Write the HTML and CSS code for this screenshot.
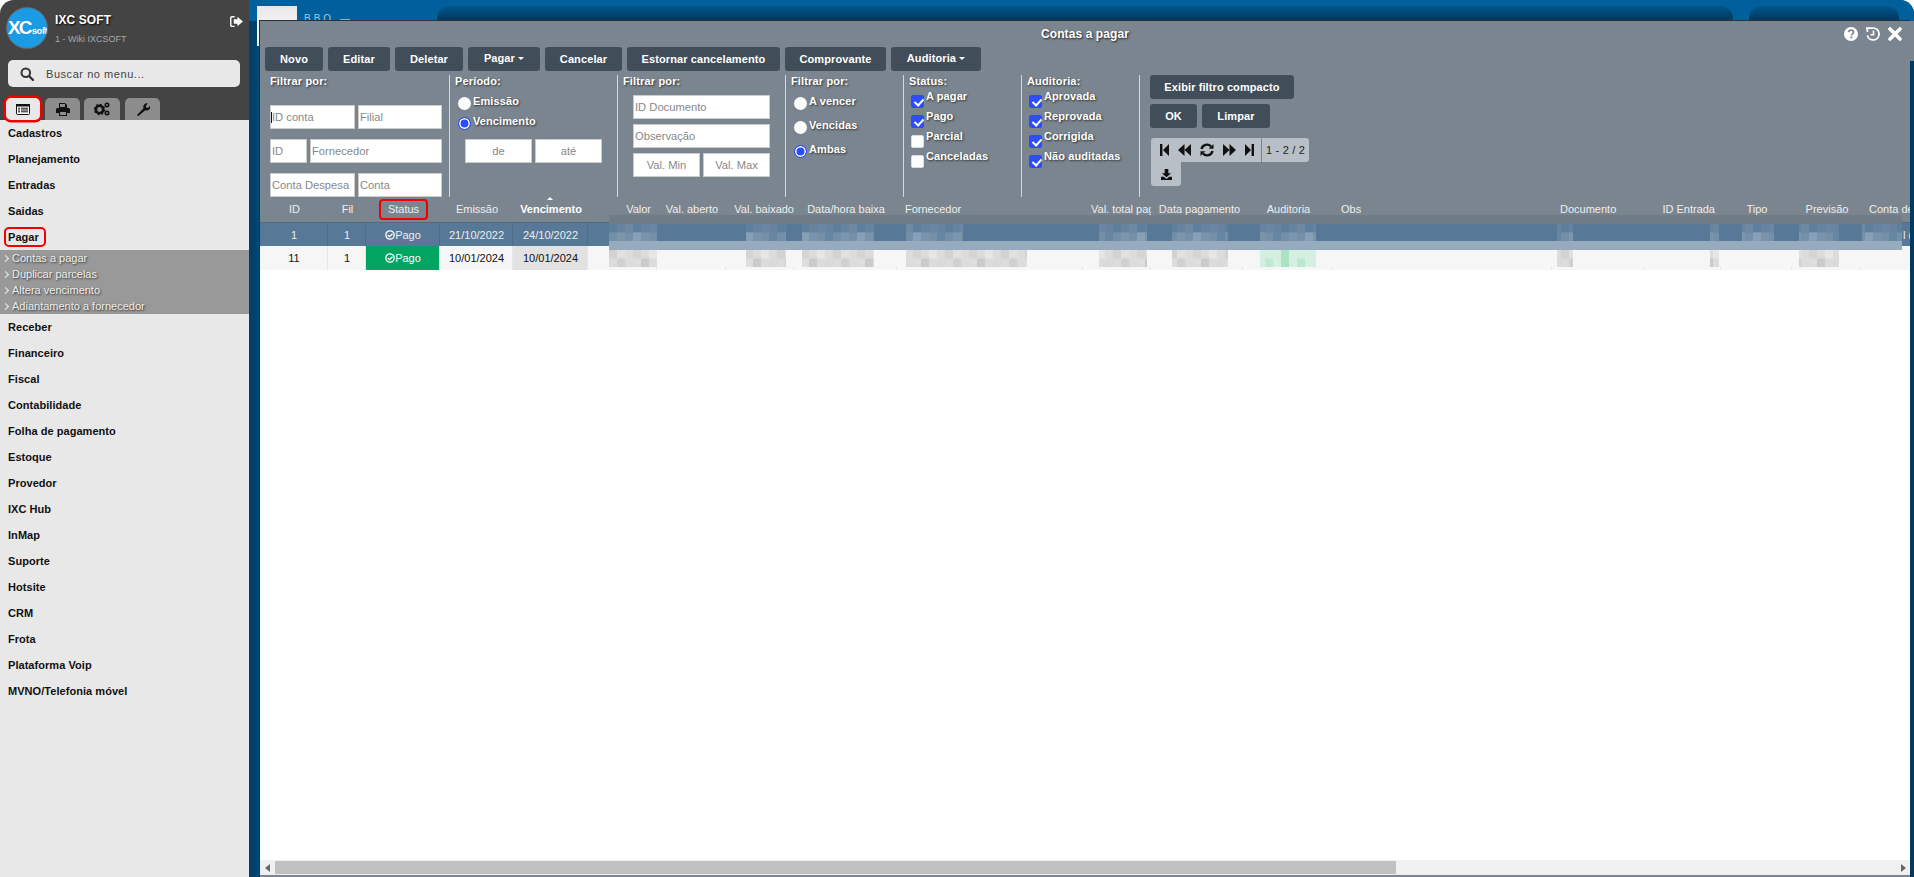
FILE: index.html
```html
<!DOCTYPE html>
<html lang="pt-BR">
<head>
<meta charset="utf-8">
<title>Contas a pagar</title>
<link rel="stylesheet" href="styles.css">
</head>
<body>
<aside class="side">
  <header class="brand">
    <div class="logo"><span class="logo-xc">XC</span><span class="logo-soft">soft</span></div>
    <div class="brand-text"><div class="brand-name">IXC SOFT</div><div class="brand-sub">1 - Wiki IXCSOFT</div></div>
    <svg class="logout" viewBox="0 0 14 12"><path d="M5 0H2a2 2 0 0 0-2 2v8a2 2 0 0 0 2 2h3v-1.500H2.200a.7.7 0 0 1-.7-.7V2.200a.7.7 0 0 1 .7-.7H5z M4 3.500h4V.8L14 6l-6 5.200V8.500H4z" fill="#fff"/></svg>
  </header>
  <div class="search">
    <svg class="search-ic" viewBox="0 0 14 14"><circle cx="5.800" cy="5.800" r="4.300" fill="none" stroke="#333" stroke-width="2"/><path d="M9 9l4 4" stroke="#333" stroke-width="2.400" stroke-linecap="round"/></svg>
    <span>Buscar no menu...</span>
  </div>
  <nav class="tabs">
    <div class="tab tab-active"><svg viewBox="0 0 14 11" width="14" height="11"><rect x=".5" y=".5" width="13" height="10" rx="1" fill="#fff" stroke="#111"/><rect x="0" y="0" width="14" height="2.500" fill="#111"/><path d="M2 4.200h2M5 4.200h7M2 6h2M5 6h7M2 7.800h2M5 7.800h7" stroke="#111" stroke-width="1"/></svg></div>
    <div class="tab"><svg viewBox="0 0 14 13" width="14" height="13"><path d="M3 0h6l2 2v3H3z M1.500 5h11A1.500 1.500 0 0 1 14 6.500V10h-3v3H3v-3H0V6.500A1.500 1.500 0 0 1 1.500 5z" fill="#111"/><rect x="4" y="9" width="6" height="3" fill="#8c8c8c"/><rect x="4" y="1" width="5" height="3" fill="#8c8c8c"/></svg></div>
    <div class="tab"><svg viewBox="0 0 16 14" width="16" height="14"><circle cx="5.500" cy="7.500" r="3.700" fill="none" stroke="#111" stroke-width="2.600"/><circle cx="5.500" cy="7.500" r="5" fill="none" stroke="#111" stroke-width="1.500" stroke-dasharray="1.800 2.100"/><circle cx="13" cy="3" r="1.700" fill="none" stroke="#111" stroke-width="1.600"/><circle cx="13" cy="11" r="1.700" fill="none" stroke="#111" stroke-width="1.600"/></svg></div>
    <div class="tab"><svg viewBox="0 0 14 14" width="14" height="14"><path d="M1 13l6.500-6.800a3.600 3.600 0 0 1 4.400-4.700L9.800 3.700l.4 1.800 1.800.4 2-2.100a3.600 3.600 0 0 1-4.700 4.500L3 13.500a1.300 1.300 0 0 1-2-.5z" fill="#111"/></svg></div>
  </nav>
  <ul class="menu">
    <li class="item">Cadastros</li>
    <li class="item">Planejamento</li>
    <li class="item">Entradas</li>
    <li class="item">Saidas</li>
    <li class="item"><span class="ring">Pagar</span></li>
    <li class="sub">
      <div class="sub-item">Contas a pagar</div>
      <div class="sub-item">Duplicar parcelas</div>
      <div class="sub-item">Altera vencimento</div>
      <div class="sub-item">Adiantamento a fornecedor</div>
    </li>
    <li class="item">Receber</li>
    <li class="item">Financeiro</li>
    <li class="item">Fiscal</li>
    <li class="item">Contabilidade</li>
    <li class="item">Folha de pagamento</li>
    <li class="item">Estoque</li>
    <li class="item">Provedor</li>
    <li class="item">IXC Hub</li>
    <li class="item">InMap</li>
    <li class="item">Suporte</li>
    <li class="item">Hotsite</li>
    <li class="item">CRM</li>
    <li class="item">Frota</li>
    <li class="item">Plataforma Voip</li>
    <li class="item">MVNO/Telefonia móvel</li>
  </ul>
</aside>

<main class="desk">
  <div class="back-tile"></div>
  <div class="back-bbo">BBO —</div>
  <div class="back-panel back-panel-a"></div>
  <div class="back-panel back-panel-b"></div>

  <section class="win">
    <header class="win-title">
      <span>Contas a pagar</span>
      <div class="win-icons">
        <svg viewBox="0 0 14 14" width="14" height="14"><circle cx="7" cy="7" r="7" fill="#fff"/><path d="M4.600 5.200C4.800 3.800 5.800 3.200 7.100 3.200c1.400 0 2.400.8 2.400 2 0 1.900-2 1.800-2 3.200" fill="none" stroke="#7a858f" stroke-width="1.700"/><rect x="6.400" y="9.500" width="2" height="1.800" fill="#7a858f"/></svg>
        <svg viewBox="0 0 14 14" width="14" height="14"><path d="M0 1.100H7.200A5.900 5.900 0 1 1 1.400 8.400" fill="none" stroke="#fff" stroke-width="1.800"/><path d="M1.400 1v4" fill="none" stroke="#fff" stroke-width="1.800"/><path d="M7.500 3.500v4.200H4.500" fill="none" stroke="#fff" stroke-width="1.600"/></svg>
        <svg viewBox="0 0 14 14" width="14" height="14"><path d="M2 2l10 10M12 2L2 12" stroke="#fff" stroke-width="3.600" stroke-linecap="round"/></svg>
      </div>
    </header>

    <div class="toolbar">
      <button class="btn w-novo">Novo</button>
      <button class="btn w-editar">Editar</button>
      <button class="btn w-deletar">Deletar</button>
      <button class="btn w-pagar btn-drop">Pagar <i class="caret"></i></button>
      <button class="btn w-cancelar">Cancelar</button>
      <button class="btn w-estornar">Estornar cancelamento</button>
      <button class="btn w-comprovante">Comprovante</button>
      <button class="btn w-auditoria btn-drop">Auditoria <i class="caret"></i></button>
    </div>

    <form class="filters">
      <fieldset class="fg fg-a">
        <div class="fg-label">Filtrar por:</div>
        <div class="in-row in-row-first"><input class="in in-85 in-caret" placeholder="ID conta"><input class="in in-84" placeholder="Filial"></div>
        <div class="in-row"><input class="in in-37" placeholder="ID"><input class="in in-132" placeholder="Fornecedor"></div>
        <div class="in-row"><input class="in in-85" placeholder="Conta Despesa"><input class="in in-84" placeholder="Conta"></div>
      </fieldset>
      <fieldset class="fg fg-b">
        <div class="fg-label">Período:</div>
        <label class="opt opt-p1"><input type="radio" name="p">Emissão</label>
        <label class="opt opt-p2"><input type="radio" name="p" checked>Vencimento</label>
        <div class="in-row in-row-date"><input class="in in-67 in-c" placeholder="de"><input class="in in-67 in-c" placeholder="até"></div>
      </fieldset>
      <fieldset class="fg fg-c">
        <div class="fg-label">Filtrar por:</div>
        <div class="stack">
          <input class="in in-137" placeholder="ID Documento">
          <input class="in in-137" placeholder="Observação">
          <div class="in-row"><input class="in in-67 in-c" placeholder="Val. Min"><input class="in in-67 in-c" placeholder="Val. Max"></div>
        </div>
      </fieldset>
      <fieldset class="fg fg-d">
        <div class="fg-label">Filtrar por:</div>
        <label class="opt opt-v"><input type="radio" name="v">A vencer</label>
        <label class="opt opt-v"><input type="radio" name="v">Vencidas</label>
        <label class="opt opt-v"><input type="radio" name="v" checked>Ambas</label>
      </fieldset>
      <fieldset class="fg fg-e">
        <div class="fg-label fg-label-tight">Status:</div>
        <label class="chk"><input type="checkbox" checked>A pagar</label>
        <label class="chk"><input type="checkbox" checked>Pago</label>
        <label class="chk"><input type="checkbox">Parcial</label>
        <label class="chk"><input type="checkbox">Canceladas</label>
      </fieldset>
      <fieldset class="fg fg-e">
        <div class="fg-label fg-label-tight">Auditoria:</div>
        <label class="chk"><input type="checkbox" checked>Aprovada</label>
        <label class="chk"><input type="checkbox" checked>Reprovada</label>
        <label class="chk"><input type="checkbox" checked>Corrigida</label>
        <label class="chk"><input type="checkbox" checked>Não auditadas</label>
      </fieldset>
      <fieldset class="fg fg-f">
        <button type="button" class="btn w-compacto">Exibir filtro compacto</button>
        <div class="btn-row"><button type="button" class="btn w-ok">OK</button><button type="button" class="btn w-limpar">Limpar</button></div>
        <div class="pager">
          <div class="pager-ic">
            <svg viewBox="0 0 9 12" width="9" height="12"><path d="M0 0h2.400v12H0zM3 6l6-6v12z" fill="#111"/></svg>
            <svg viewBox="0 0 13 12" width="13" height="12"><path d="M0 6l6.500-6v12zM6.500 6L13 0v12z" fill="#111"/></svg>
            <svg viewBox="0 0 14 14" width="14" height="14"><path d="M1.500 6A5.500 5.500 0 0 1 11 3.500" fill="none" stroke="#111" stroke-width="2.400"/><path d="M13.500 1v4.800H8.700z" fill="#111"/><path d="M12.500 8A5.500 5.500 0 0 1 3 10.500" fill="none" stroke="#111" stroke-width="2.400"/><path d="M.5 13V8.200h4.800z" fill="#111"/></svg>
            <svg viewBox="0 0 13 12" width="13" height="12"><path d="M0 0l6.500 6L0 12zM6.500 0L13 6l-6.500 6z" fill="#111"/></svg>
            <svg viewBox="0 0 9 12" width="9" height="12"><path d="M0 0l6 6-6 6zM6.600 0H9v12H6.600z" fill="#111"/></svg>
          </div>
          <div class="pager-count">1 - 2 / 2</div>
        </div>
        <div class="pager-dl"><svg viewBox="0 0 12 12" width="11" height="11"><path d="M4 0h4v4.500h3L6 9 1 4.500h3z" fill="#111"/><path d="M0 8.500h3L6 11l3-2.500h3V12H0z" fill="#111"/></svg></div>
      </fieldset>
    </form>

    <div class="grid">
      <div class="g-row g-head">
        <div class="c">ID</div><div class="c">Fil</div><div class="c"><span class="ring ring-status">Status</span></div><div class="c">Emissão</div>
        <div class="c c-sorted">Vencimento</div><div class="c c-r">Valor</div><div class="c">Val. aberto</div><div class="c c-r c-r0">Val. baixado</div>
        <div class="c">Data/hora baixa</div><div class="c c-l">Fornecedor</div><div class="c c-clip">Val. total pago</div><div class="c c-off">Data pagamento</div>
        <div class="c">Auditoria</div><div class="c c-l">Obs</div><div class="c c-l">Documento</div><div class="c c-r">ID Entrada</div>
        <div class="c">Tipo</div><div class="c">Previsão</div><div class="c c-l">Conta de</div>
      </div>
      <div class="g-row g-sel">
        <div class="c">1</div><div class="c">1</div><div class="c"><svg class="ok-ic" viewBox="0 0 10 10"><circle cx="5" cy="5" r="4.200" fill="none" stroke="#fff" stroke-width="1.300"/><path d="M2.800 5l1.700 1.700 3-3" fill="none" stroke="#fff" stroke-width="1.300"/></svg>Pago</div><div class="c">21/10/2022</div>
        <div class="c">24/10/2022</div><div class="c"></div><div class="c"></div><div class="c"></div><div class="c"></div><div class="c"></div><div class="c"></div><div class="c"></div><div class="c"></div><div class="c"></div><div class="c"></div><div class="c"></div><div class="c"></div><div class="c"></div><div class="c c-tail">l (</div>
      </div>
      <div class="g-row g-plain">
        <div class="c">11</div><div class="c">1</div><div class="c c-paid"><svg class="ok-ic" viewBox="0 0 10 10"><circle cx="5" cy="5" r="4.200" fill="none" stroke="#fff" stroke-width="1.300"/><path d="M2.800 5l1.700 1.700 3-3" fill="none" stroke="#fff" stroke-width="1.300"/></svg>Pago</div><div class="c">10/01/2024</div>
        <div class="c c-due">10/01/2024</div><div class="c"></div><div class="c"></div><div class="c"></div><div class="c"></div><div class="c"></div><div class="c"></div><div class="c"></div><div class="c"></div><div class="c"></div><div class="c"></div><div class="c"></div><div class="c"></div><div class="c"></div><div class="c"></div>
      </div>
      <div class="g-empty"></div>
      <div class="hscroll">
        <svg class="arrow" viewBox="0 0 5 8"><path d="M5 0v8L0 4z" fill="#666"/></svg>
        <div class="thumb"></div>
        <svg class="arrow arrow-r" viewBox="0 0 5 8"><path d="M0 0v8l5-4z" fill="#666"/></svg>
      </div>
    </div>

    <svg class="mosaic" width="1293" height="52" viewBox="0 0 1293 52" aria-hidden="true">
      <defs>
        <pattern id="ma" width="56" height="17" patternUnits="userSpaceOnUse">
          <rect width="56" height="17" fill="#6783a0"/>
          <rect width="8" height="8.500" fill="#5e7f9c"/><rect x="16" width="8" height="8.500" fill="#6d89a4"/><rect x="24" width="8" height="8.500" fill="#5e7f9d"/><rect x="40" width="8" height="8.500" fill="#6a86a2"/>
          <rect y="8.500" width="56" height="8.500" fill="#7490a9"/>
          <rect y="8.500" x="8" width="8" height="8.500" fill="#7c96ae"/><rect y="8.500" x="24" width="8" height="8.500" fill="#86a0b5"/><rect y="8.500" x="32" width="8" height="8.500" fill="#7a94ac"/><rect y="8.500" x="48" width="8" height="8.500" fill="#6686a2"/>
        </pattern>
        <pattern id="mb" width="56" height="17" patternUnits="userSpaceOnUse">
          <rect width="56" height="17" fill="#dcdcdc"/>
          <rect width="8" height="8.500" fill="#d3d2d0"/><rect x="8" width="8" height="8.500" fill="#e2e0dd"/><rect x="24" width="8" height="8.500" fill="#d6d4d1"/><rect x="40" width="8" height="8.500" fill="#e6e6e6"/>
          <rect y="8.500" x="8" width="8" height="8.500" fill="#d0d0d0"/><rect y="8.500" x="24" width="8" height="8.500" fill="#dedede"/><rect y="8.500" x="32" width="8" height="8.500" fill="#cbcbcb"/><rect y="8.500" x="48" width="8" height="8.500" fill="#d9dbde"/>
        </pattern>
        <pattern id="mg" width="56" height="17" patternUnits="userSpaceOnUse">
          <rect width="56" height="17" fill="#d5efe2"/>
          <rect width="8" height="17" fill="#abe2c4"/><rect x="16" y="8.500" width="8" height="8.500" fill="#b9e8ce"/><rect x="40" y="8.500" width="8" height="8.500" fill="#bfe9d2"/>
        </pattern>
      </defs>
      <rect class="m-top" x="0" y="0" width="1293" height="9"/>
      <rect class="m-bluebase" x="0" y="9" width="1293" height="17"/>
      <rect class="m-mid" x="0" y="26" width="1293" height="9"/>
      <rect class="m-lite" x="0" y="35" width="1293" height="17"/>
      <g transform="translate(0 9)" fill="url(#ma)">
        <rect width="48" height="17"/><rect x="137" width="40" height="17"/><rect x="193" width="72" height="17"/><rect x="297" width="57" height="17"/><rect x="490" width="48" height="17"/><rect x="563" width="56" height="17"/><rect x="651" width="56" height="17"/><rect x="948" width="16" height="17"/><rect x="1101" width="9" height="17"/><rect x="1133" width="32" height="17"/><rect x="1190" width="40" height="17"/><rect x="1253" width="40" height="17"/>
      </g>
      <g transform="translate(0 35)">
        <g fill="url(#mb)"><rect width="48" height="17"/><rect x="137" width="40" height="17"/><rect x="193" width="72" height="17"/><rect x="297" width="121" height="17"/><rect x="490" width="48" height="17"/><rect x="563" width="56" height="17"/><rect x="948" width="16" height="17"/><rect x="1101" width="9" height="17"/><rect x="1190" width="40" height="17"/></g>
        <rect x="651" width="56" height="17" fill="url(#mg)"/>
      </g>
    </svg>
  </section>
</main>
</body>
</html>
```
FILE: styles.css
```css
* { box-sizing: border-box; }
html, body { margin: 0; height: 100%; overflow: hidden; }
body {
  display: flex;
  width: 1914px;
  height: 877px;
  font-family: "Liberation Sans", Arial, sans-serif;
  background: #fff;
}

/* sidebar */
.side {
  width: 249px;
  flex: none;
  height: 877px;
  background: #e8e8e8;
  border-top-left-radius: 14px;
  overflow: hidden;
}
.brand {
  height: 120px;
  margin-bottom: -120px;
  background: #444;
  display: flex;
  padding: 7px 0 0 6px;
  position: relative;
  align-items: flex-start;
}
.logo {
  width: 42px;
  height: 42px;
  flex: none;
  border-radius: 50%;
  background: #1b9be3;
  border: 1px solid #666;
  color: #fff;
  display: flex;
  align-items: center;
  padding-left: 1px;
  overflow: hidden;
  white-space: nowrap;
}
.logo-xc { font-weight: 700; font-size: 19px; letter-spacing: -1.800px; }
.logo-soft { font-weight: 700; font-size: 9.500px; margin-top: 5px; margin-left: 1px; letter-spacing: -.5px; }
.brand-text { margin-left: 7px; }
.brand-name { color: #fff; font-weight: 700; font-size: 12px; line-height: 14px; margin-top: 6px; text-shadow: 1px 1px 2px #000; letter-spacing: .1px; }
.brand-sub { color: #a8a8a8; font-size: 9px; line-height: 12px; margin-top: 6px; }
.logout { width: 13px; height: 11px; position: absolute; left: 230px; top: 16px; }
.search {
  position: relative;
  margin: 60px 0 0 8px;
  width: 232px;
  height: 27px;
  border-radius: 5px;
  background: #e8e8e8;
  display: flex;
  align-items: center;
  padding-left: 12px;
  font-size: 11px;
  letter-spacing: .55px;
  color: #444;
}
.search-ic { width: 14px; height: 14px; margin-right: 12px; }
.tabs {
  position: relative;
  display: flex;
  height: 33px;
  padding-top: 11px;
  padding-left: 5px;
}
.tab {
  height: 22px;
  width: 35px;
  margin-right: 4px;
  background: #8c8c8c;
  border-radius: 5px 5px 0 0;
  display: flex;
  align-items: center;
  justify-content: center;
}
.tab:nth-child(3) { width: 36px; }
.tab:nth-child(4) { margin-left: 1px; }
.tab-active {
  background: #e8e8e8;
  box-shadow: 0 0 0 2.500px #f00000;
  border-radius: 5px;
  width: 34px;
  margin-right: 5px;
  margin-left: 1px;
}
.menu { list-style: none; margin: 0; padding: 0; }
.item {
  height: 26px;
  line-height: 26px;
  padding-left: 8px;
  font-size: 11px;
  font-weight: 700;
  color: #111;
  letter-spacing: .05px;
}
.ring {
  display: inline-block;
  border: 2.500px solid #f00000;
  border-radius: 5px;
}
.item .ring { line-height: 16px; padding: 0 5px 0 2px; margin-left: -4px; }
.sub { background: #999; padding: 0; height: 64px; }
.sub-item {
  height: 16px;
  line-height: 16px;
  font-size: 11px;
  color: #eee;
  padding-left: 12px;
  text-shadow: 1px 1px 2px #333;
  position: relative;
}
.sub-item::before {
  content: "";
  position: absolute;
  left: 3px;
  top: 6px;
  width: 4px;
  height: 4px;
  border-top: 1px solid #eee;
  border-right: 1px solid #eee;
  transform: rotate(45deg);
}

/* desktop behind */
.desk {
  position: relative;
  flex: 1;
  height: 877px;
  background: linear-gradient(90deg, #00406a 0, #00406a 7px, #00507f 10px, #003a60 1660px);
  overflow: hidden;
  border-top-right-radius: 14px;
}
.desk::before {
  content: "";
  position: absolute;
  left: 0; top: 0; right: 0; height: 21px;
  background: #00609b;
}
.back-tile { position: absolute; left: 8px; top: 6px; width: 40px; height: 40px; background: linear-gradient(180deg, #e8e8e8, #fff); }
.back-bbo { position: absolute; left: 55px; top: 13px; font-size: 10px; letter-spacing: 3px; color: #a9c3d6; }
.back-panel { position: absolute; top: 6px; height: 16px; border-radius: 12px 12px 0 0; background: linear-gradient(180deg, #00568d, #00355a); }
.back-panel-a { left: 188px; width: 1296px; }
.back-panel-b { left: 1500px; width: 150px; }

/* window */
.win {
  position: absolute;
  left: 10px;
  top: 20px;
  width: 1651px;
  height: 857px;
  background: #7a858f;
  border-top: 1px solid #2b3035;
  border-left: 1px solid #2b3035;
  color: #fff;
}
.win::before {
  content: "";
  position: absolute;
  left: 100%;
  top: 0;
  width: 5px;
  height: 40px;
  background: #7a858f;
}
.win-title {
  height: 26px;
  display: flex;
  align-items: center;
  justify-content: center;
  font-size: 12px;
  font-weight: 700;
  text-shadow: 1px 1px 2px #222;
  letter-spacing: .1px;
  position: relative;
}
.win-icons { position: absolute; right: 8px; top: 6px; display: flex; gap: 8px; }
.toolbar { display: flex; gap: 5px; padding-left: 5px; height: 24px; }
.btn {
  height: 24px;
  padding: 0;
  border: 0;
  border-radius: 3px;
  background: #414d59;
  color: #fff;
  font: 700 11px "Liberation Sans", Arial, sans-serif;
  letter-spacing: .1px;
}
.btn-drop { padding-bottom: 2px; }
.caret { display: inline-block; margin-left: 0; vertical-align: 2px; border: 3px solid transparent; border-top: 3.500px solid #fff; border-bottom: 0; }
.w-novo { width: 58px; } .w-editar { width: 62px; } .w-deletar { width: 68px; } .w-pagar { width: 72px; }
.w-cancelar { width: 77px; } .w-estornar { width: 153px; } .w-comprovante { width: 101px; } .w-auditoria { width: 90px; }
.w-compacto { width: 144px; display: block; } .w-ok { width: 47px; } .w-limpar { width: 68px; }

/* filters */
.filters { display: flex; height: 122px; margin-top: 4px; padding-left: 189px; position: relative; }
.fg { border: 0; margin: 0; padding: 0 0 0 5px; border-left: 1px solid #d4d8dc; height: 122px; min-width: 0; }
.fg-a { position: absolute; left: 5px; top: 0; width: 184px; border-left: 0; }
.fg-b { width: 168px; }
.fg-c { width: 168px; }
.fg-d { width: 118px; }
.fg-e { width: 118px; }
.fg-f { padding-left: 10px; width: 300px; }
.fg-label { font-size: 11px; font-weight: 700; line-height: 13px; letter-spacing: .15px; text-shadow: 1px 1px 2px #333; }
.in-row { display: flex; gap: 3px; margin-top: 10px; }
.in-row-first { margin-top: 17px; }
.in-row-date { margin-top: 8px; margin-left: 10px; }
.in {
  height: 24px;
  padding: 0 1px;
  border: 1px solid #ccc;
  background: #fff;
  font: 11.200px "Liberation Sans", Arial, sans-serif;
  border-radius: 0;
  outline: 0;
}
.in-caret { background: #fff linear-gradient(#111, #111) 0 6px / 1px 11px no-repeat; }
.in::placeholder { color: #888; opacity: 1; }
.in-c { text-align: center; }
.in-85 { width: 85px; } .in-84 { width: 84px; } .in-37 { width: 37px; } .in-132 { width: 132px; }
.in-67 { width: 67px; } .in-137 { width: 137px; }
.stack { display: flex; flex-direction: column; gap: 5px; margin: 7px 0 0 10px; }
.stack .in-row { margin-top: 0; }

.opt, .chk {
  display: flex;
  font-size: 11px;
  font-weight: 700;
  letter-spacing: .1px;
  text-shadow: 1px 1px 2px #333;
  line-height: 13px;
}
.opt input, .chk input {
  appearance: none;
  width: 13px;
  height: 13px;
  margin: 0;
  flex: none;
  background: #fff;
  position: relative;
}
.opt input { margin: 2px 2px 1px 3px; border-radius: 50%; }
.opt input:checked { border: 1px solid #2b4dff; box-shadow: inset 0 0 0 1.500px #fff; background: #2b4dff; }
.opt-p1 { margin-top: 7px; }
.opt-p2 { margin-top: 4px; }
.opt-v { margin-top: 8px; }
.opt-v:first-of-type { margin-top: 7px; }
.chk { height: 20px; }
.chk input { margin: 5px 2px 0 2px; border-radius: 2px; border: 1px solid #ddd; }
.chk input:checked { background: #2b4dff; border-color: #2b4dff; }
.chk input:checked::after {
  content: "";
  position: absolute;
  left: 3.500px; top: 1px;
  width: 4px; height: 7px;
  border: solid #fff;
  border-width: 0 2px 2px 0;
  transform: rotate(42deg);
}
.fg-label-tight { height: 15px; }

.btn-row { display: flex; gap: 5px; margin-top: 5px; }
.pager { display: flex; margin-top: 10px; margin-left: 1px; height: 24px; }
.pager-ic { width: 110px; background: #b8bfc7; border-radius: 3px 0 0 0; display: flex; align-items: center; padding-left: 9px; gap: 9px; }
.pager-count { width: 47px; margin-left: 1px; background: #b8bfc7; border-radius: 0 3px 3px 0; color: #222; font-size: 11px; line-height: 24px; text-align: center; letter-spacing: .2px; }
.pager-dl { margin-left: 1px; width: 30px; height: 24px; background: #b8bfc7; border-radius: 0 0 3px 3px; display: flex; align-items: center; justify-content: center; }

/* grid */
.grid { background: #fff; height: 678px; display: flex; flex-direction: column; overflow: hidden; }
.g-row {
  display: grid;
  grid-template-columns: 68px 38px 74px 73px 75px 69px 69px 68px 103px 186px 68px 92px 90px 219px 93px 76px 71px 69px 100px;
  flex: none;
  font-size: 11px;
}
.g-head { height: 25px; background: #7a858f; color: #eee; line-height: 25px; }
.g-head .c { text-align: center; white-space: nowrap; overflow: hidden; padding-left: 1px; }
.g-head .c-r { text-align: right; padding-right: 6px; }
.g-head .c-r0 { padding-right: 0; }
.g-head .c-l { text-align: left; padding-left: 8px; }
.g-head .c-clip { text-align: left; padding-left: 8px; }
.g-head .c-off { padding-left: 5px; }
.g-head .c:nth-child(3) { overflow: visible; }
.g-head .c-sorted { font-weight: 700; color: #fff; position: relative; overflow: visible; }
.c-sorted::before {
  content: "";
  position: absolute;
  left: 34px;
  top: 0;
  border: 3px solid transparent;
  border-bottom: 3.500px solid #fff;
  border-top: 0;
}
.ring-status { line-height: 17px; padding: 0 6.500px; border-radius: 4px; }
.g-sel, .g-plain { height: 24px; line-height: 24px; text-align: center; }
.g-sel .c, .g-plain .c { padding-left: 1px; }
.g-sel { background: #577896; color: #eee; border-top: 1px solid #566a7d; }
.g-sel .c { border-right: 1px solid #4e6c88; }
.g-sel .c-tail { text-align: left; padding-left: 42px; border-right: 0; white-space: nowrap; }
.g-plain { background: #f7f6f6; color: #111; }
.g-plain .c { border-right: 1px solid #e6e6e6; }
.c-paid { background: #00a562; color: #fff; }
.c-due { background: #e2e2e2; }
.ok-ic { width: 10px; height: 10px; vertical-align: -1px; }
.g-empty { flex: 1; }
.hscroll { height: 15px; flex: none; background: #f0f0f0; display: flex; align-items: center; padding-left: 5px; position: relative; }
.arrow { width: 5px; height: 8px; flex: none; }
.arrow-r { position: absolute; right: 4px; }
.thumb { width: 1121px; height: 13px; margin-left: 5px; background: #c0c0c0; }

/* redacted cells, pixelated overlay */
.mosaic { position: absolute; left: 349px; top: 194px; }
.m-top { fill: #6f7b86; }
.m-bluebase { fill: #577896; }
.m-mid { fill: #96abbe; }
.m-lite { fill: #f7f6f6; }
```
